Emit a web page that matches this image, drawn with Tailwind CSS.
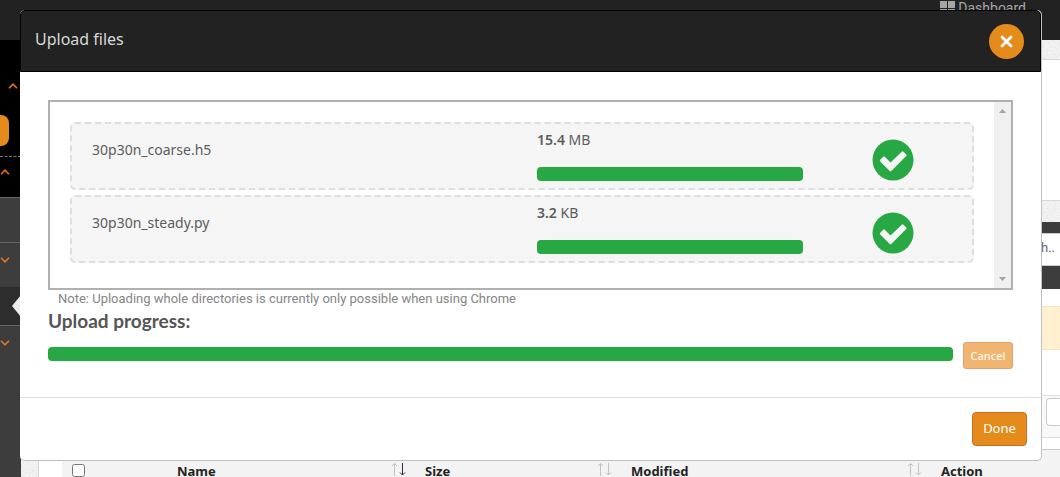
<!DOCTYPE html>
<html lang="en">
<head>
<meta charset="utf-8">
<meta name="viewport" content="width=device-width, initial-scale=1">
<title>Upload files</title>
<script src="https://cdn.jsdelivr.net/npm/@tailwindcss/browser@4"></script>
</head>
<body class="relative h-screen overflow-hidden bg-white font-['Noto_Sans',sans-serif] text-sm text-[#5c5c5c]">

<!-- Page behind the dialog -->
<div class="flex h-full flex-col">
  <header class="flex h-10 shrink-0 justify-end bg-[#222] pr-[34px]">
    <a href="#" class="flex items-start gap-[3px] font-[Roboto,sans-serif] text-sm leading-4 text-[#a5a5a5]">
      <svg class="mt-px h-4 w-[15px]" viewBox="0 0 15 16" fill="#a5a5a5" aria-hidden="true"><path d="M0 0h7v7H0zM8 0h7v7H8zM0 8h7v6H0zM8 8h7v6H8z"/></svg>
      <span>Dashboard</span>
    </a>
  </header>

  <div class="flex min-h-0 flex-1">
    <nav class="w-[21px] shrink-0 overflow-hidden bg-[#3d3d3d]" aria-label="Sidebar">
      <div class="h-[157px] bg-black">
        <div class="flex h-[75px] items-end justify-end pr-[3px] pb-[26px]">
          <svg class="h-[6px] w-[10px]" viewBox="0 0 10 6" fill="none" stroke="#e8710f" stroke-width="1.6" aria-hidden="true"><path d="M1 5.200 5 1.200l4 4"/></svg>
        </div>
        <div class="h-[31px] w-[9px] rounded-r-lg bg-[#e58b1b]"></div>
        <div class="mt-[10px] border-t border-dashed border-[#777] pt-3">
          <svg class="h-[6px] w-[10px]" viewBox="0 0 10 6" fill="none" stroke="#e8710f" stroke-width="1.6" aria-hidden="true"><path d="M1 5.200 5 1.200l4 4"/></svg>
        </div>
      </div>
      <div class="h-[45px] border-t border-[#666]"></div>
      <div class="h-[45px] border-t border-[#666] pt-[14px]">
        <svg class="h-[6px] w-[10px]" viewBox="0 0 10 6" fill="none" stroke="#e27722" stroke-width="1.6" aria-hidden="true"><path d="M1 0.800 5 4.800l4-4"/></svg>
      </div>
      <div class="flex h-[38px] items-center justify-end bg-[#2d2d2d]">
        <svg class="h-[22px] w-[9px]" viewBox="0 0 9 22" fill="#ededed" aria-hidden="true"><path d="M9 0v22L0 11z"/></svg>
      </div>
      <div class="border-t border-[#666] pt-[14px]">
        <svg class="h-[6px] w-[10px]" viewBox="0 0 10 6" fill="none" stroke="#e27722" stroke-width="1.6" aria-hidden="true"><path d="M1 0.800 5 4.800l4-4"/></svg>
      </div>
    </nav>

    <main class="relative min-w-0 flex-1 bg-[#f0f0f0] pt-[19px] pl-[17px]">
      <!-- Paper texture -->
      <svg class="absolute inset-0 h-full w-full" aria-hidden="true">
        <filter id="paper" color-interpolation-filters="sRGB"><feTurbulence type="fractalNoise" baseFrequency="0.5" numOctaves="2"/><feColorMatrix values="0.1 0 0 0 0.89  0.1 0 0 0 0.89  0.1 0 0 0 0.89  0 0 0 0 1"/></filter>
        <rect width="100%" height="100%" filter="url(#paper)"/>
      </svg>
      <div class="relative flex h-full flex-col">
        <section class="h-[142px] shrink-0 border-y border-l border-[#d8d8d8] bg-white"></section>
        <section class="mt-[21px] flex flex-1 flex-col border-l border-[#d8d8d8] bg-white">
          <div class="flex h-[67px] shrink-0 items-center justify-end bg-[#3d3d3d] pb-[13px]">
            <div class="h-[33px] w-32 border-y border-l border-[#ccc] bg-white pr-[5px] text-right font-[Roboto,sans-serif] text-[13px] leading-[27px] text-[#666]">Search..</div>
          </div>
          <div class="mt-[17px] h-11 shrink-0 border-y border-[#f8e6b5] bg-[#fff1cf]"></div>
          <div class="mt-[45px] flex h-[43px] shrink-0 justify-end border-y border-[#ddd] bg-[#f8f8f8] pt-[2px]">
            <div class="h-7 w-[14px] rounded-l border border-r-0 border-[#c8ccd2] bg-white"></div>
          </div>
          <div class="mt-[11px] ml-[23px] flex-1 border-t border-[#ccc] bg-[#f3f3f3]">
            <table class="w-full table-fixed text-left text-[13px] leading-[18px] font-semibold text-[#222]">
              <thead>
                <tr>
                  <th class="w-[110px] pt-[14px] pl-[10px] align-top"><input type="checkbox" aria-label="Select all" class="block size-[13px]"></th>
                  <th class="w-[248px] pt-3 pl-[5px] align-top"><div class="flex justify-between pr-[13px]"><span>Name</span>
                    <svg class="h-[14px] w-4" viewBox="0 0 16 14" fill="none" stroke="#c2c2c2" aria-hidden="true"><path d="M3.500 14V1.500M1 4l2.500-2.500L6 4"/><path stroke="#3a2440" d="M11.500 1v12M9 10.500l2.500 2.500 2.500-2.500"/></svg></div></th>
                  <th class="w-[206px] pt-3 pl-[5px] align-top"><div class="flex justify-between pr-[13px]"><span>Size</span>
                    <svg class="h-[14px] w-4" viewBox="0 0 16 14" fill="none" stroke="#c2c2c2" aria-hidden="true"><path d="M3.500 14V1.500M1 4l2.500-2.500L6 4M11.500 1v12M9 10.500l2.500 2.500 2.500-2.500"/></svg></div></th>
                  <th class="w-[310px] pt-3 pl-[5px] align-top"><div class="flex justify-between pr-[13px]"><span>Modified</span>
                    <svg class="h-[14px] w-4" viewBox="0 0 16 14" fill="none" stroke="#c2c2c2" aria-hidden="true"><path d="M3.500 14V1.500M1 4l2.500-2.500L6 4M11.500 1v12M9 10.500l2.500 2.500 2.500-2.500"/></svg></div></th>
                  <th class="pt-3 pl-[5px] align-top">Action</th>
                </tr>
              </thead>
            </table>
          </div>
        </section>
      </div>
    </main>
  </div>
</div>

<!-- Dialog -->
<div role="dialog" aria-labelledby="dialog-title" class="absolute top-[10px] right-[18px] left-5 rounded-[5px] border-r border-b border-[#bfc0c0] bg-white">
  <div class="flex h-[62px] items-center justify-between rounded-t-[5px] border border-black bg-[#222] pr-4 pl-[14px]">
    <h1 id="dialog-title" class="pb-1 text-base text-[#d8d8d8]">Upload files</h1>
    <button type="button" aria-label="Close" class="flex size-[35px] items-center justify-center rounded-full bg-[#e58b1b]">
      <svg class="size-[13px]" viewBox="0 0 13 13" stroke="#fff" stroke-width="2.800" stroke-linecap="round" aria-hidden="true"><path d="M2 2l9 9M11 2l-9 9"/></svg>
    </button>
  </div>

  <div class="px-7 pt-7">
    <div class="flex border-2 border-[#b0b0b0]">
      <ul class="flex flex-1 flex-col gap-[5px] px-5 pt-5 pb-[25px]">
        <li class="flex h-[68px] rounded-[5px] border-2 border-dashed border-[#dedede] bg-[#f5f5f5]">
          <div class="w-[465px] pt-4 pl-5">30p30n_coarse.h5</div>
          <div class="w-[266px] pt-[6px]">
            <div><strong class="font-semibold">15.4</strong> MB</div>
            <div class="mt-[17px] h-[14px] rounded-[4px] bg-[#28a745]" role="progressbar" aria-valuenow="100" aria-label="30p30n_coarse.h5"></div>
          </div>
          <svg class="mt-[15px] ml-[69px] size-[42px]" viewBox="0 0 42 42" role="img" aria-label="Complete"><circle cx="21" cy="21" r="20.500" fill="#28a745"/><path d="M8.200 20.700 11.200 17.700Q12 17 12.800 17.700L18.500 23.400 29.800 12.700Q30.700 12 31.500 12.700L34.200 15.400Q35 16.200 34.200 17L19.300 31.900Q18.500 32.700 17.700 31.900L8.200 22.400Q7.400 21.500 8.200 20.700Z" fill="#f5f5f5"/></svg>
        </li>
        <li class="flex h-[68px] rounded-[5px] border-2 border-dashed border-[#dedede] bg-[#f5f5f5]">
          <div class="w-[465px] pt-4 pl-5">30p30n_steady.py</div>
          <div class="w-[266px] pt-[6px]">
            <div><strong class="font-semibold">3.2</strong> KB</div>
            <div class="mt-[17px] h-[14px] rounded-[4px] bg-[#28a745]" role="progressbar" aria-valuenow="100" aria-label="30p30n_steady.py"></div>
          </div>
          <svg class="mt-[15px] ml-[69px] size-[42px]" viewBox="0 0 42 42" role="img" aria-label="Complete"><circle cx="21" cy="21" r="20.500" fill="#28a745"/><path d="M8.200 20.700 11.200 17.700Q12 17 12.800 17.700L18.500 23.400 29.800 12.700Q30.700 12 31.500 12.700L34.200 15.400Q35 16.200 34.200 17L19.300 31.900Q18.500 32.700 17.700 31.900L8.200 22.400Q7.400 21.500 8.200 20.700Z" fill="#f5f5f5"/></svg>
        </li>
      </ul>
      <div class="flex w-[17px] flex-col items-center justify-between bg-[#f0f0f0] py-[7px]" aria-hidden="true">
        <svg class="h-1 w-[7px]" viewBox="0 0 7 4" fill="#a3a3a3"><path d="M3.500 0 7 4H0z"/></svg>
        <svg class="h-1 w-[7px]" viewBox="0 0 7 4" fill="#a3a3a3"><path d="M3.500 4 7 0H0z"/></svg>
      </div>
    </div>
    <p class="pl-[10px] font-[Roboto,sans-serif] text-[13px] leading-[18px] text-[#858585]">Note: Uploading whole directories is currently only possible when using Chrome</p>
    <h2 class="font-[Lato,sans-serif] text-[19px] leading-[26px] font-bold text-[#555]">Upload progress:</h2>
    <div class="mt-2 flex items-start gap-[10px]">
      <div class="mt-[5px] h-[14px] flex-1 rounded-[4px] bg-[#28a745]" role="progressbar" aria-valuenow="100" aria-label="Upload progress"></div>
      <button type="button" disabled class="h-[27px] w-[50px] rounded-[3px] border border-[#e0a070] bg-[#efb571] pb-px text-[11px] leading-none font-medium text-[#fff6ea]">Cancel</button>
    </div>
  </div>

  <div class="mt-7 flex justify-end border-t border-[#dedede] px-[14px] pt-[14px] pb-[14px]">
    <button type="button" class="h-[34px] w-[55px] rounded-[4px] border border-[#cf6a2c] bg-[#e58b1b] pb-px text-[13px] leading-none text-white">Done</button>
  </div>
</div>
</body>
</html>
